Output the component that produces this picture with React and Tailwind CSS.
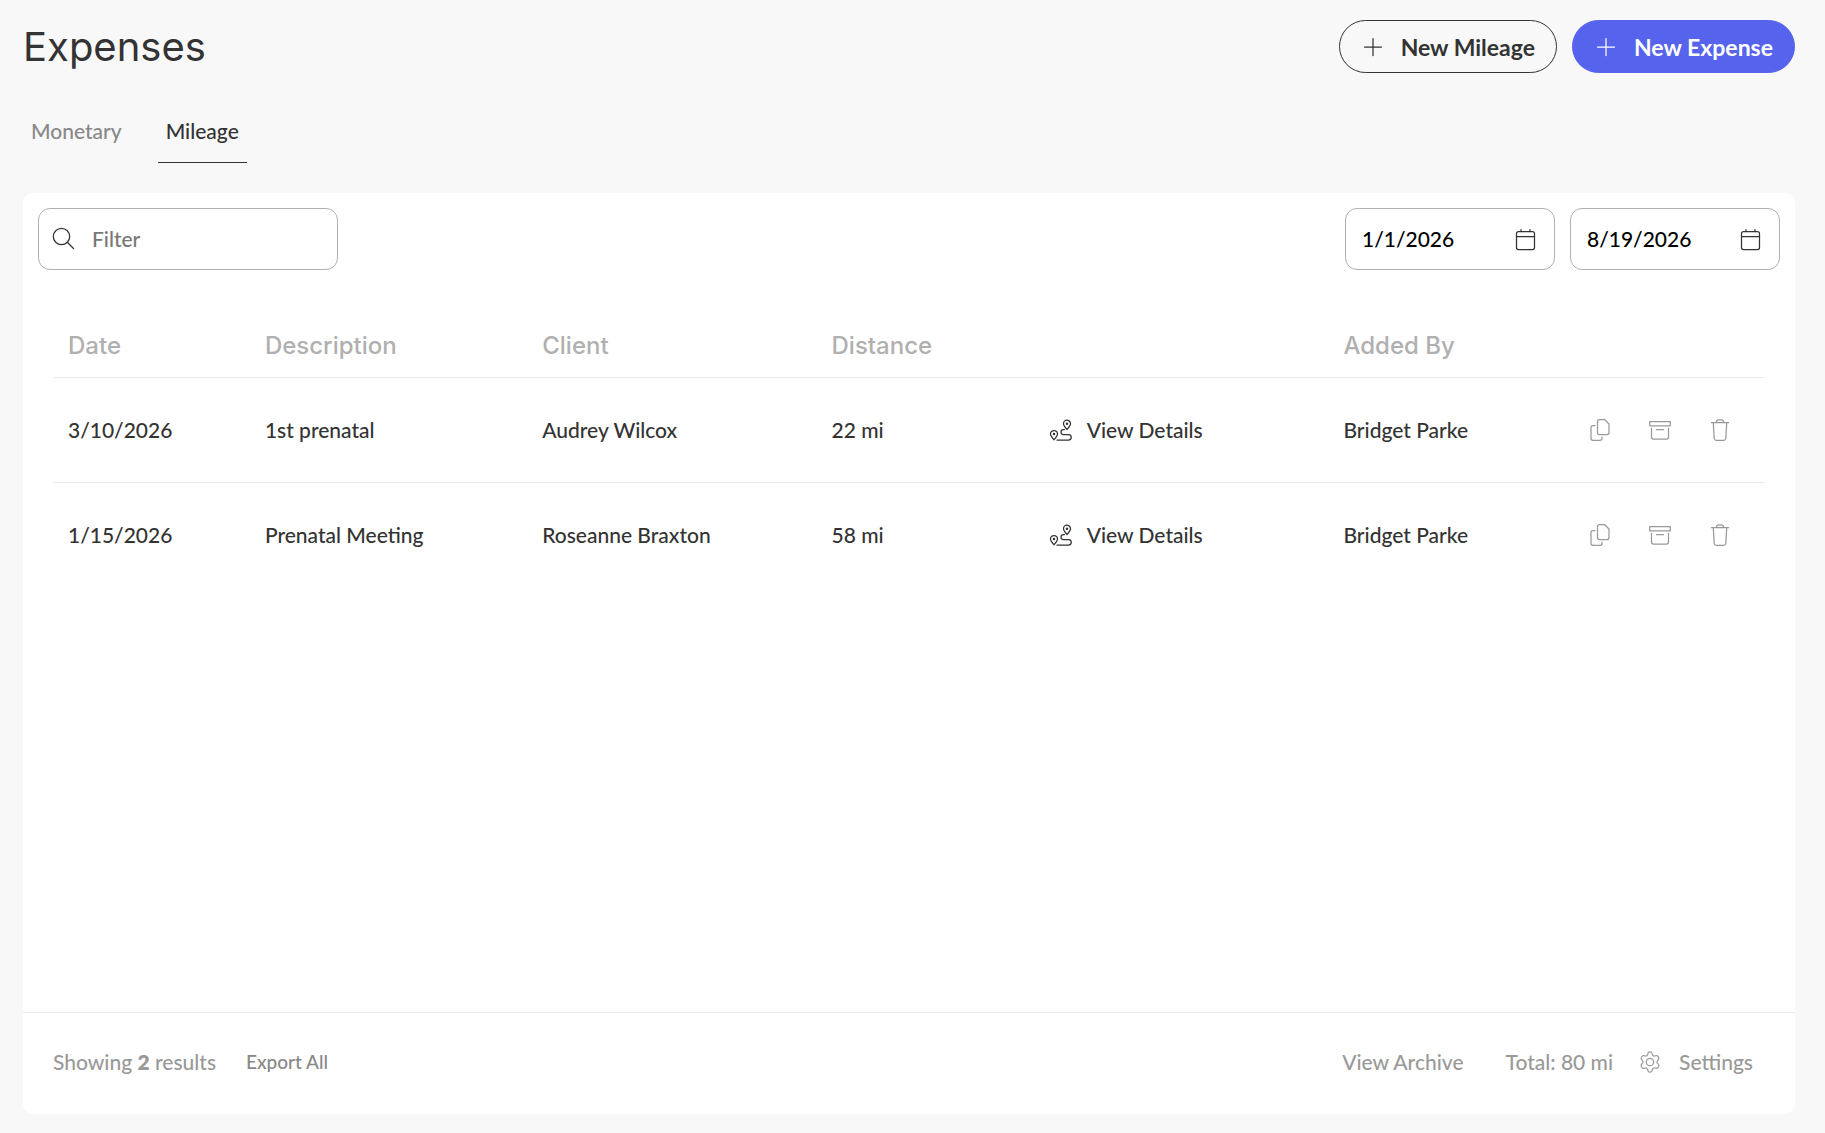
import clsx from 'clsx'

const trips = [
  { id: 1, date: '3/10/2026', description: '1st prenatal', client: 'Audrey Wilcox', distance: '22 mi', addedBy: 'Bridget Parke' },
  { id: 2, date: '1/15/2026', description: 'Prenatal Meeting', client: 'Roseanne Braxton', distance: '58 mi', addedBy: 'Bridget Parke' },
]

function Icon({ children }) {
  return (
    <svg
      viewBox="0 0 24 24"
      fill="none"
      stroke="currentColor"
      strokeWidth={1.25}
      strokeLinecap="round"
      strokeLinejoin="round"
      className="size-6 shrink-0"
      aria-hidden="true"
    >
      {children}
    </svg>
  )
}

function PlusIcon() {
  return (
    <Icon>
      <path d="M12 3.500v17M3.500 12h17" />
    </Icon>
  )
}

function SearchIcon() {
  return (
    <Icon>
      <circle cx="9.500" cy="9.500" r="8.200" />
      <path d="M15.500 15.500l6 6" />
    </Icon>
  )
}

function CalendarIcon() {
  return (
    <Icon>
      <rect x="2.500" y="4.500" width="18" height="18" rx="2" />
      <path d="M2.500 9.500h18M7 2.500v2M16 2.500v2" />
    </Icon>
  )
}

function RouteIcon() {
  return (
    <Icon>
      <path d="M18 11.500c-2-2.300-3.500-4-3.500-5.800a3.500 3.500 0 0 1 7 0c0 1.800-1.500 3.500-3.500 5.800z" />
      <path d="M5 21.800c-2-2.300-3.500-4-3.500-5.800a3.500 3.500 0 0 1 7 0c0 1.800-1.500 3.500-3.500 5.800z" />
      <circle cx="18" cy="5.700" r=".6" fill="currentColor" />
      <circle cx="5" cy="16" r=".6" fill="currentColor" />
      <path d="M15.500 11.500h-1a2.500 2.500 0 0 0 0 5h5a2.700 2.700 0 0 1 0 5.500H8" />
    </Icon>
  )
}

function CopyIcon() {
  return (
    <Icon>
      <path d="M11.500 1.700h5.200l4.300 4.300v8.500a2 2 0 0 1-2 2h-7.500a2 2 0 0 1-2-2V3.700a2 2 0 0 1 2-2z" />
      <path d="M7 7.500H5a2 2 0 0 0-2 2v10.800a2 2 0 0 0 2 2h7a2 2 0 0 0 2-2V19" />
    </Icon>
  )
}

function ArchiveIcon() {
  return (
    <Icon>
      <path d="M1.700 3.500h20.600v4.300H1.700z" />
      <path d="M3.500 10v9a2 2 0 0 0 2 2h13a2 2 0 0 0 2-2v-9M8.500 11.700h7" />
    </Icon>
  )
}

function TrashIcon() {
  return (
    <Icon>
      <path d="M3.500 4.700h17M5.300 5l.9 15.500a2 2 0 0 0 2 1.800h7.600a2 2 0 0 0 2-1.800L18.700 5" />
      <path d="M8.200 4.500c.3-1.700 1.100-2.600 2.500-2.600h2.600c1.400 0 2.200.9 2.500 2.600" />
    </Icon>
  )
}

function GearIcon() {
  return (
    <Icon>
      <path d="M9.900 3.400c.4-2 3.800-2 4.200 0l.4 1.300c.3.900 1.300 1.500 2.200 1.300l1.400-.3c1.900-.4 3.700 2.500 2.300 4l-1 1.100c-.6.700-.6 1.700 0 2.400l1 1.100c1.400 1.500-.4 4.400-2.300 4l-1.400-.3c-.9-.2-1.900.4-2.200 1.300l-.4 1.300c-.4 2-3.800 2-4.200 0l-.4-1.300c-.3-.9-1.300-1.500-2.200-1.300l-1.400.3c-1.900.4-3.700-2.500-2.300-4l1-1.100c.6-.7.6-1.700 0-2.400l-1-1.100c-1.400-1.500.4-4.400 2.300-4l1.400.3c.9.200 1.900-.4 2.200-1.300z" />
      <circle cx="12" cy="12" r="3.700" />
    </Icon>
  )
}

function PillButton({ primary, children }) {
  return (
    <button
      type="button"
      className={clsx(
        'flex h-[53px] items-center gap-4 rounded-full border px-[21px] text-[23px] font-bold',
        primary ? 'border-[#5663ed] bg-[#5663ed] text-white' : 'border-[#333333] text-[#333333]'
      )}
    >
      <PlusIcon />
      {children}
    </button>
  )
}

function DateField({ label, value }) {
  return (
    <div className="flex h-[62px] w-[210px] items-center rounded-xl border border-[#b0b0b0] px-4">
      <input
        type="text"
        aria-label={label}
        defaultValue={value}
        className="w-full min-w-0 bg-transparent text-black outline-none"
      />
      <button type="button" aria-label={`Open ${label} calendar`} className="text-[#333333]">
        <CalendarIcon />
      </button>
    </div>
  )
}

function TripRow({ trip, last }) {
  return (
    <tr className={clsx('h-[105px]', !last && 'border-b border-[#ebebeb]')}>
      <td className="px-[15px]">{trip.date}</td>
      <td className="px-[15px]">{trip.description}</td>
      <td className="px-[15px]">{trip.client}</td>
      <td className="px-[15px]">{trip.distance}</td>
      <td className="px-[13px]">
        <button type="button" className="flex items-center gap-[14px]">
          <RouteIcon />
          View Details
        </button>
      </td>
      <td className="px-[15px]">{trip.addedBy}</td>
      <td className="px-[33px] text-[#999999]">
        <div className="flex justify-end gap-9">
          <button type="button" aria-label="Duplicate"><CopyIcon /></button>
          <button type="button" aria-label="Archive"><ArchiveIcon /></button>
          <button type="button" aria-label="Delete"><TrashIcon /></button>
        </div>
      </td>
    </tr>
  )
}

export default function App() {
  return (
    <div className="flex min-h-screen flex-col bg-[#f8f8f8] pt-5 pr-[30px] pb-[19px] pl-[23px] font-[Lato,sans-serif] text-[21px] leading-7 font-medium text-[#333333]">
      {/* Header */}
      <header className="flex items-center justify-between">
        <h1 className="font-[Inter,sans-serif] text-[40px] leading-[52px] font-normal">Expenses</h1>
        <div className="flex gap-[15px]">
          <PillButton>New Mileage</PillButton>
          <PillButton primary>New Expense</PillButton>
        </div>
      </header>

      {/* Tabs */}
      <nav className="mt-[30px] flex gap-7">
        <a href="#monetary" className="px-2 pt-[14px] pb-[17px] text-[#888888]">Monetary</a>
        <a href="#mileage" aria-current="page" className="border-b border-[#333333] px-2 pt-[14px] pb-[17px]">Mileage</a>
      </nav>

      <main className="mt-[30px] flex flex-1 flex-col rounded-[10px] bg-white">
        {/* Filters */}
        <div className="flex items-center justify-between p-[15px]">
          <label className="flex h-[62px] w-[300px] items-center gap-4 rounded-xl border border-[#b0b0b0] px-[13px]">
            <SearchIcon />
            <input
              type="text"
              aria-label="Filter"
              placeholder="Filter"
              className="w-full min-w-0 bg-transparent outline-none placeholder:text-[#777777]"
            />
          </label>
          <div className="flex gap-[15px]">
            <DateField label="start date" value="1/1/2026" />
            <DateField label="end date" value="8/19/2026" />
          </div>
        </div>

        {/* Trips */}
        <div className="flex-1 px-[30px] pt-[30px]">
          <table className="w-full table-fixed border-collapse text-left">
            <colgroup>
              <col className="w-[11.5%]" />
              <col className="w-[16.2%]" />
              <col className="w-[16.9%]" />
              <col className="w-[12.8%]" />
              <col className="w-[17.1%]" />
              <col className="w-[13%]" />
              <col />
            </colgroup>
            <thead>
              <tr className="h-[62px] border-b border-[#ebebeb] font-[Inter,sans-serif] text-2xl text-[#b0b0b0]">
                <th className="px-[15px] font-medium">Date</th>
                <th className="px-[15px] font-medium">Description</th>
                <th className="px-[15px] font-medium">Client</th>
                <th className="px-[15px] font-medium">Distance</th>
                <td />
                <th className="px-[15px] font-medium">Added By</th>
                <td />
              </tr>
            </thead>
            <tbody>
              {trips.map((trip, i) => (
                <TripRow key={trip.id} trip={trip} last={i === trips.length - 1} />
              ))}
            </tbody>
          </table>
        </div>

        {/* Summary */}
        <footer className="flex h-[102px] items-center justify-between border-t border-[#ebebeb] pr-[42px] pb-1 pl-[30px] text-[#999999]">
          <div className="flex items-center gap-[30px]">
            <p>Showing <b className="font-extrabold">2</b> results</p>
            <button type="button" className="text-[19px] text-[#888888]">Export All</button>
          </div>
          <div className="flex items-center">
            <a href="#archive">View Archive</a>
            <span className="ml-[42px]">Total: 80 mi</span>
            <button type="button" className="ml-[25px] flex items-center gap-[17px]">
              <GearIcon />
              Settings
            </button>
          </div>
        </footer>
      </main>
    </div>
  )
}
